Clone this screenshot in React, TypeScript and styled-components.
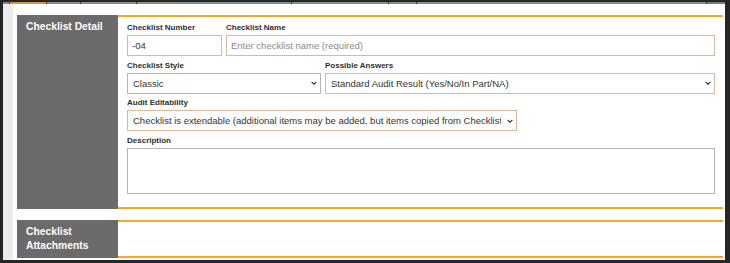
import React from "react";
import styled, { createGlobalStyle } from "styled-components";

const GlobalStyle = createGlobalStyle`
  html, body { margin: 0; padding: 0; background: #ffffff; }
  body { font-family: "Liberation Sans", Arial, sans-serif; }
  * { box-sizing: border-box; }
`;

const ORANGE = "#f7a82c";
const PEACH = "#ddb898";
const GREY_BORDER = "#b4b4b4";

const Frame = styled.div`
  width: 730px;
  height: 263px;
  border-style: solid;
  border-color: #262626;
  border-width: 2px 5px 3px 3px;
  display: flex;
  flex-direction: column;
  background: #ffffff;
  overflow: hidden;
`;

const TabStrip = styled.div`
  height: 2px;
  display: flex;
  background: #7a7a7a;
`;

const Tab = styled.div<{ $w: number; $active?: boolean }>`
  width: ${(p) => p.$w}px;
  height: 100%;
  background: ${(p) => (p.$active ? "#d8963a" : "#8a8a8a")};
  border-right: 1px solid #3a3a3a;
`;

const Body = styled.div`
  flex: 1;
  display: flex;
  min-height: 0;
`;

const Gutter = styled.div`
  width: 10px;
  background: #ececec;
`;

const Content = styled.div`
  flex: 1;
  padding: 11px 2px 0 4px;
  display: flex;
  flex-direction: column;
  gap: 11.5px;
`;

const Section = styled.section`
  display: flex;
`;

const SideTitle = styled.div`
  width: 101px;
  flex: none;
  background: #6b6b6b;
  color: #ffffff;
  font-weight: 700;
  font-size: 10.3px;
  line-height: 13.5px;
  padding: 5px 9px 6px 9px;
`;

const Panel = styled.div<{ $minH?: number }>`
  flex: 1;
  border-top: 2px solid ${ORANGE};
  border-bottom: 2px solid ${ORANGE};
  padding: 6px 8px 13px 9px;
  display: flex;
  flex-direction: column;
  gap: 4.5px;
  min-height: ${(p) => (p.$minH ? `${p.$minH}px` : "auto")};
`;

const FieldRow = styled.div`
  display: flex;
  gap: 4px;
`;

const Field = styled.div<{ $w?: number }>`
  display: flex;
  flex-direction: column;
  ${(p) => (p.$w ? `width: ${p.$w}px; flex: none;` : "flex: 1; min-width: 0;")}
`;

const Label = styled.label`
  font-weight: 700;
  font-size: 8px;
  line-height: 10px;
  color: #2e2e2e;
  margin-bottom: 2px;
  white-space: nowrap;
`;

const TextInput = styled.input<{ $tone: "peach" | "grey" }>`
  height: 21px;
  width: 100%;
  border: 1px solid ${(p) => (p.$tone === "peach" ? PEACH : GREY_BORDER)};
  border-radius: 0;
  padding: 0 4px;
  font-family: "Liberation Sans", Arial, sans-serif;
  font-size: 9.5px;
  color: #333333;
  background: #ffffff;
  outline: none;
  &::placeholder { color: #8a8a8a; }
`;

const SelectWrap = styled.div`
  position: relative;
  width: 100%;
`;

const Select = styled.select<{ $tone: "peach" | "grey" }>`
  appearance: none;
  -webkit-appearance: none;
  height: 21px;
  width: 100%;
  border: 1px solid ${(p) => (p.$tone === "peach" ? PEACH : GREY_BORDER)};
  border-radius: 0;
  padding: 0 15px 0 5px;
  font-family: "Liberation Sans", Arial, sans-serif;
  font-size: 9.5px;
  color: #333333;
  background: #ffffff;
  outline: none;
  text-overflow: clip;
  white-space: nowrap;
  overflow: hidden;
`;

const Chevron = styled.svg`
  position: absolute;
  right: 4px;
  top: 50%;
  margin-top: -2px;
  width: 6px;
  height: 4px;
  pointer-events: none;
`;

const TextArea = styled.textarea`
  height: 46px;
  width: 100%;
  border: 1px solid ${GREY_BORDER};
  border-radius: 0;
  resize: none;
  padding: 3px 4px;
  font-family: "Liberation Sans", Arial, sans-serif;
  font-size: 9.5px;
  outline: none;
`;

type Tone = "peach" | "grey";

const Dropdown: React.FC<{ tone: Tone; value: string }> = ({ tone, value }) => (
  <SelectWrap>
    <Select $tone={tone} defaultValue={value}>
      <option value={value}>{value}</option>
    </Select>
    <Chevron viewBox="0 0 10 6">
      <path d="M1 1 L5 5 L9 1" fill="none" stroke="#333" strokeWidth="1.9" />
    </Chevron>
  </SelectWrap>
);

const tabs = [7, 37, 34, 56, 155, 97, 28, 290];

export default function App() {
  return (
    <>
      <GlobalStyle />
      <Frame>
        <TabStrip>
          {tabs.map((w, i) => (
            <Tab key={i} $w={w} $active={i === 1} />
          ))}
        </TabStrip>
        <Body>
          <Gutter />
          <Content>
            <Section>
              <SideTitle>Checklist Detail</SideTitle>
              <Panel>
                <FieldRow>
                  <Field $w={95}>
                    <Label>Checklist Number</Label>
                    <TextInput $tone="peach" defaultValue="-04" />
                  </Field>
                  <Field>
                    <Label>Checklist Name</Label>
                    <TextInput $tone="peach" placeholder="Enter checklist name (required)" />
                  </Field>
                </FieldRow>
                <FieldRow>
                  <Field $w={194}>
                    <Label>Checklist Style</Label>
                    <Dropdown tone="grey" value="Classic" />
                  </Field>
                  <Field>
                    <Label>Possible Answers</Label>
                    <Dropdown tone="peach" value="Standard Audit Result (Yes/No/In Part/NA)" />
                  </Field>
                </FieldRow>
                <FieldRow>
                  <Field $w={390}>
                    <Label>Audit Editability</Label>
                    <Dropdown
                      tone="peach"
                      value="Checklist is extendable (additional items may be added, but items copied from Checklist cannot be changed)"
                    />
                  </Field>
                </FieldRow>
                <FieldRow>
                  <Field>
                    <Label>Description</Label>
                    <TextArea />
                  </Field>
                </FieldRow>
              </Panel>
            </Section>
            <Section>
              <SideTitle>Checklist Attachments</SideTitle>
              <Panel $minH={38} />
            </Section>
          </Content>
        </Body>
      </Frame>
    </>
  );
}
